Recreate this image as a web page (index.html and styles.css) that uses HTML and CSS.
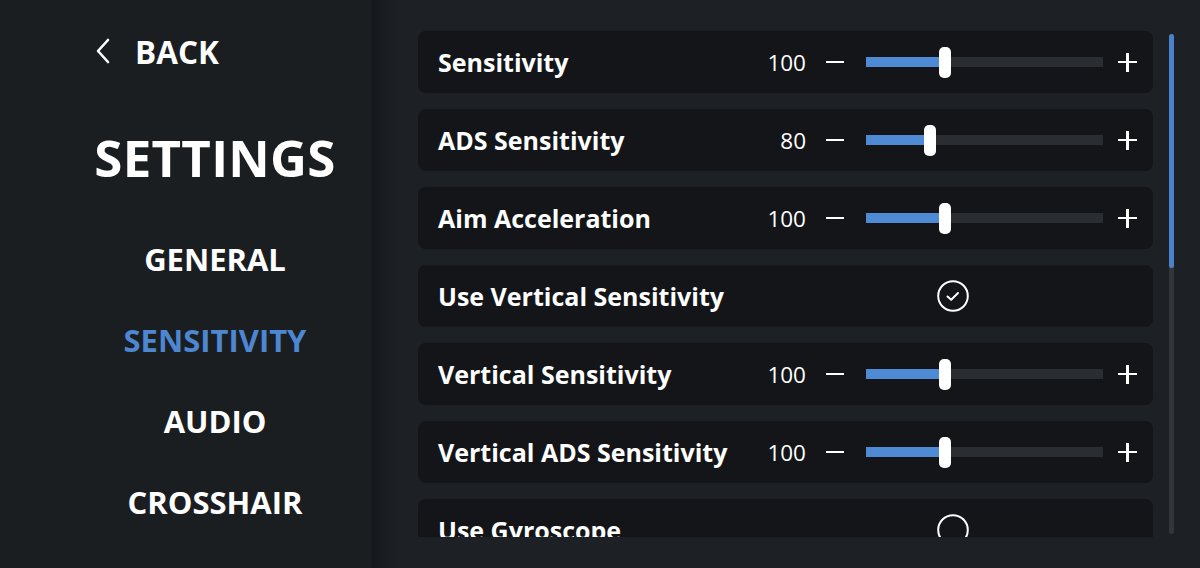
FILE: index.html
```html
<!DOCTYPE html>
<html>
<head>
<meta charset="utf-8">
<link rel="stylesheet" href="styles.css">
</head>
<body>
<div class="app">
  <aside class="sidebar">
    <div class="back">
      <svg class="chev" width="16" height="26" viewBox="0 0 16 26"><path d="M13 2 L3 13 L13 24" fill="none" stroke="#fff" stroke-width="2.6" stroke-linecap="round" stroke-linejoin="round"/></svg>
      <span>BACK</span>
    </div>
    <h1 class="title">SETTINGS</h1>
    <nav class="nav">
      <div class="nav-item">GENERAL</div>
      <div class="nav-item active">SENSITIVITY</div>
      <div class="nav-item">AUDIO</div>
      <div class="nav-item">CROSSHAIR</div>
    </nav>
  </aside>
  <main class="main">
    <div class="scroller">
      <div class="list">
        <div class="row"><div class="label">Sensitivity</div>
          <div class="controls"><span class="value">100</span><span class="minus"></span><div class="track"><div class="fill" style="width:79px"></div><div class="thumb" style="left:73px"></div></div><span class="plus"></span></div></div>
        <div class="row"><div class="label">ADS Sensitivity</div>
          <div class="controls"><span class="value">80</span><span class="minus"></span><div class="track"><div class="fill" style="width:64px"></div><div class="thumb" style="left:58px"></div></div><span class="plus"></span></div></div>
        <div class="row"><div class="label">Aim Acceleration</div>
          <div class="controls"><span class="value">100</span><span class="minus"></span><div class="track"><div class="fill" style="width:79px"></div><div class="thumb" style="left:73px"></div></div><span class="plus"></span></div></div>
        <div class="row"><div class="label">Use Vertical Sensitivity</div>
          <div class="toggle"><svg width="32" height="32" viewBox="0 0 32 32"><circle cx="16" cy="16" r="14.8" fill="none" stroke="#fff" stroke-width="2"/><path d="M10.5 16.5 L14.2 19.8 L21 13" fill="none" stroke="#fff" stroke-width="2" stroke-linecap="round" stroke-linejoin="round"/></svg></div></div>
        <div class="row"><div class="label">Vertical Sensitivity</div>
          <div class="controls"><span class="value">100</span><span class="minus"></span><div class="track"><div class="fill" style="width:79px"></div><div class="thumb" style="left:73px"></div></div><span class="plus"></span></div></div>
        <div class="row"><div class="label">Vertical ADS Sensitivity</div>
          <div class="controls"><span class="value">100</span><span class="minus"></span><div class="track"><div class="fill" style="width:79px"></div><div class="thumb" style="left:73px"></div></div><span class="plus"></span></div></div>
        <div class="row"><div class="label">Use Gyroscope</div>
          <div class="toggle"><svg width="32" height="32" viewBox="0 0 32 32"><circle cx="16" cy="16" r="14.8" fill="none" stroke="#fff" stroke-width="2"/></svg></div></div>
      </div>
    </div>
    <div class="scrollbar"><div class="scroll-thumb"></div></div>
  </main>
</div>
</body>
</html>
```
FILE: styles.css
```css
* { box-sizing: border-box; }
html, body { margin: 0; padding: 0; }
body {
  width: 1200px;
  height: 568px;
  overflow: hidden;
  background: #1d2024;
  font-family: "Open Sans", "Noto Sans", sans-serif;
  color: #fff;
}
.app {
  display: flex;
  height: 568px;
}
.sidebar {
  width: 372px;
  flex: none;
  background: #1b1e21;
  display: flex;
  flex-direction: column;
  padding-top: 31px;
}
.back {
  display: flex;
  align-items: center;
  height: 40px;
  padding-left: 95px;
  gap: 24px;
  font-size: 31.5px;
  font-weight: 700;
}
.chev { flex: none; }
.title {
  margin: 56px 0 0 0;
  padding-left: 58px;
  text-align: center;
  font-size: 51px;
  line-height: 60px;
  font-weight: 700;
  letter-spacing: 0.3px;
}
.nav {
  margin-top: 32px;
  padding-left: 58px;
  display: flex;
  flex-direction: column;
}
.nav-item {
  height: 81px;
  line-height: 81px;
  text-align: center;
  font-size: 31px;
  font-weight: 700;
}
.nav-item.active { color: #4d87d2; }
.main {
  flex: 1;
  position: relative;
  background: linear-gradient(90deg, #14171a 0px, #1a1d21 14px, #1d2024 28px);
  padding-top: 31px;
  padding-left: 46px;
}
.scroller {
  height: 506px;
  overflow: hidden;
  width: 735px;
}
.list {
  display: flex;
  flex-direction: column;
  gap: 16px;
}
.row {
  height: 62px;
  flex: none;
  background: #131518;
  border-radius: 8px;
  display: flex;
  align-items: center;
  padding: 0 16px 0 20px;
}
.label {
  flex: 1;
  font-size: 25px;
  font-weight: 700;
}
.controls {
  display: flex;
  align-items: center;
  width: 391px;
  flex: none;
}
.value {
  width: 60px;
  text-align: right;
  font-size: 22.5px;
  line-height: 30px;
  padding-top: 2px;
  font-weight: 400;
  margin-right: 20px;
}
.minus {
  width: 18px;
  height: 2.5px;
  background: #fff;
  margin-right: 22px;
}
.track {
  position: relative;
  width: 237px;
  height: 10px;
  background: #2a2d32;
  margin-right: 15px;
}
.fill {
  height: 100%;
  background: #4f8ad5;
}
.thumb {
  position: absolute;
  top: -10px;
  width: 12px;
  height: 31px;
  background: #fff;
  border-radius: 5px;
}
.plus {
  position: relative;
  width: 19px;
  height: 19px;
}
.plus::before, .plus::after {
  content: "";
  position: absolute;
  background: #fff;
}
.plus::before { left: 0; right: 0; top: 8.25px; height: 2.5px; }
.plus::after { top: 0; bottom: 0; left: 8.25px; width: 2.5px; }
.toggle {
  width: 391px;
  flex: none;
  padding-left: 191px;
  display: flex;
  align-items: center;
}
.toggle svg { display: block; }
.scrollbar {
  position: absolute;
  left: 797px;
  top: 34px;
  width: 5px;
  height: 500px;
  background: #32363b;
  border-radius: 3px;
}
.scroll-thumb {
  height: 234px;
  background: #4a83cb;
  border-radius: 3px;
}
```
